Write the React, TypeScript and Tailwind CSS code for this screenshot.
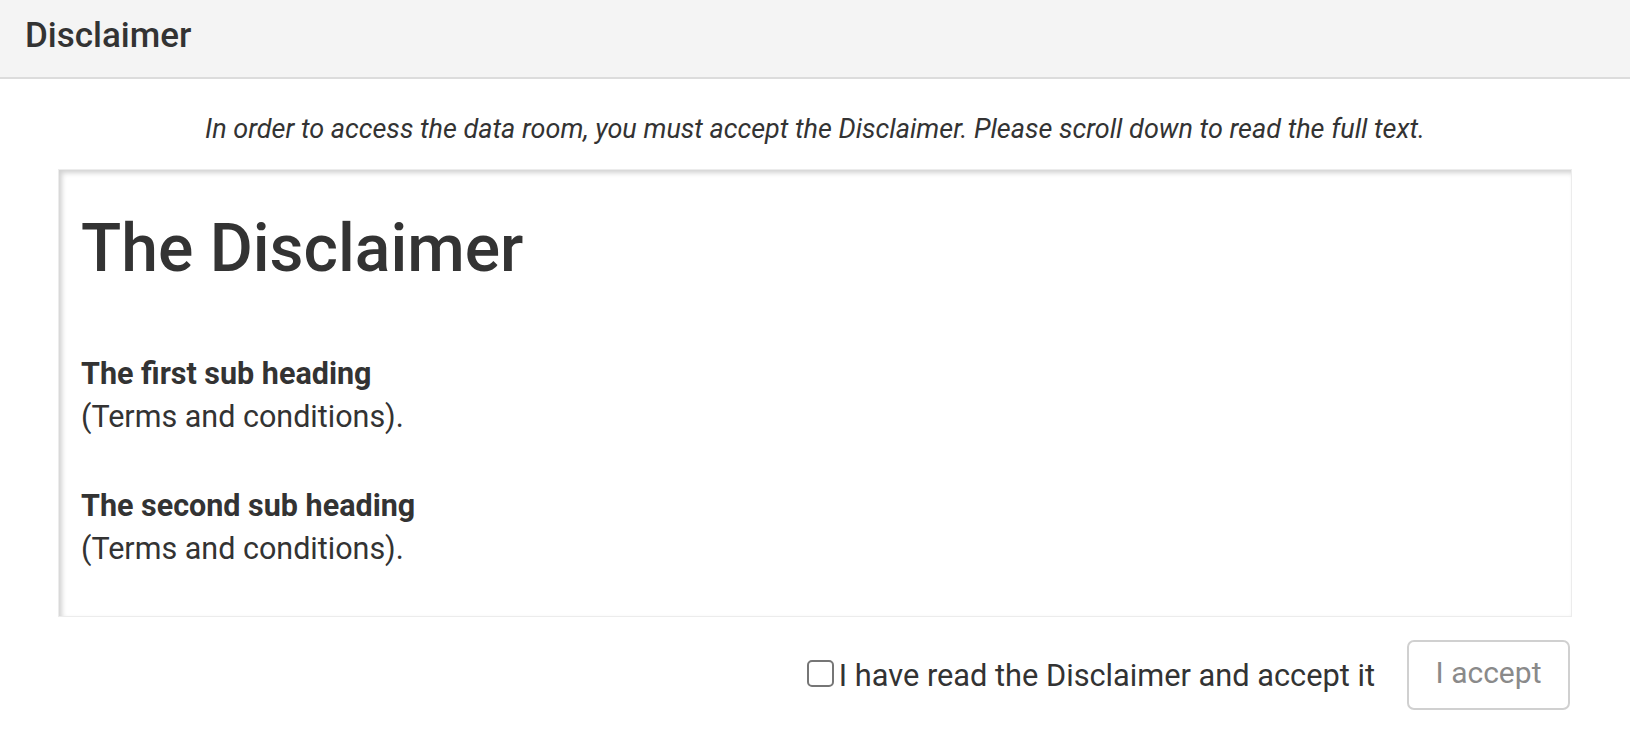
export default function App() {
  return (
    <div className="min-h-screen bg-white font-['Roboto',sans-serif] text-[#333]">
      <header className="flex h-[79px] items-center border-b-2 border-[#dcdcdc] bg-[#f4f4f4] px-[25px] pb-[6px]">
        <h1 className="text-[35px] font-medium leading-none">Disclaimer</h1>
      </header>

      <div className="px-[58px]">
        <p className="pt-[32px] pb-[22px] text-center text-[27px] italic leading-[36px]">
          In order to access the data room, you must accept the Disclaimer. Please scroll down to read the full text.
        </p>

        <div className="h-[448px] overflow-hidden border border-[#ececec] px-[22px] pt-[43px] shadow-[inset_3px_3px_5px_rgba(0,0,0,0.18)]">
          <h2 className="text-[66px] font-medium leading-[1.1]">The Disclaimer</h2>
          <div className="mt-[66px] text-[30.5px] leading-[43px]">
            <p className="mb-[46px]">
              <b className="font-bold">The first sub heading</b>
              <br />
              (Terms and conditions).
            </p>
            <p>
              <b className="font-bold">The second sub heading</b>
              <br />
              (Terms and conditions).
            </p>
          </div>
        </div>

        <div className="mt-[23px] flex items-center justify-end gap-[32px] pr-[2px]">
          <label className="flex items-center gap-[5px] text-[30.75px] leading-[43px]">
            <span className="mt-[-4px] h-[27px] w-[27px] rounded-[5px] border-2 border-[#767676] bg-white" />
            I have read the Disclaimer and accept it
          </label>
          <button className="h-[70px] w-[163px] rounded-[7px] border-2 border-[#d0d0d0] bg-white pb-[6px] text-[30px] text-[#8a8a8a]">
            I accept
          </button>
        </div>
      </div>
    </div>
  );
}
